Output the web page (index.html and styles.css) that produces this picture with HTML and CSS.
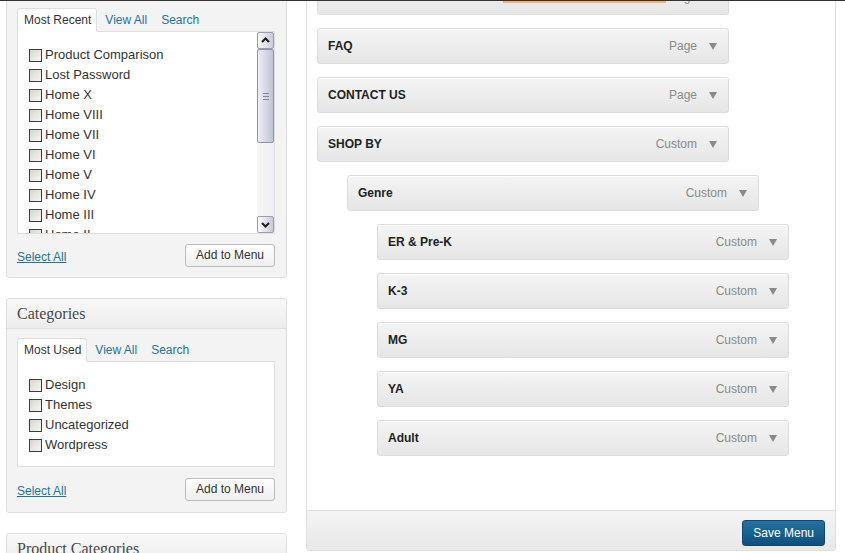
FILE: index.html
```html
<!DOCTYPE html>
<html lang="en">
<head>
<meta charset="utf-8">
<title>Menus</title>
<link rel="stylesheet" href="styles.css">
</head>
<body>
<div class="layout">
  <aside class="sidebar">
    <section class="panel panel-pages">
      <div class="panel-body">
        <ul class="tabs">
          <li class="tab active">Most Recent</li>
          <li class="tab"><a href="#">View All</a></li>
          <li class="tab"><a href="#">Search</a></li>
        </ul>
        <div class="tab-box scroll-box">
          <ul class="checklist">
            <li><input type="checkbox">Product Comparison</li>
            <li><input type="checkbox">Lost Password</li>
            <li><input type="checkbox">Home X</li>
            <li><input type="checkbox">Home VIII</li>
            <li><input type="checkbox">Home VII</li>
            <li><input type="checkbox">Home VI</li>
            <li><input type="checkbox">Home V</li>
            <li><input type="checkbox">Home IV</li>
            <li><input type="checkbox">Home III</li>
            <li><input type="checkbox">Home II</li>
          </ul>
          <div class="scrollbar">
            <div class="sb-btn"><svg width="15" height="15" viewBox="0 0 15 15"><polyline points="4,9 7.5,5.5 11,9" fill="none" stroke="#1e1e1e" stroke-width="2"/></svg></div>
            <div class="sb-thumb"><span class="grip"></span></div>
            <div class="sb-track"></div>
            <div class="sb-btn"><svg width="15" height="15" viewBox="0 0 15 15"><polyline points="4,6 7.5,9.5 11,6" fill="none" stroke="#1e1e1e" stroke-width="2"/></svg></div>
          </div>
        </div>
        <div class="panel-foot">
          <a href="#" class="select-all">Select All</a>
          <button class="btn">Add to Menu</button>
        </div>
      </div>
    </section>

    <section class="panel panel-cats">
      <h3 class="panel-head">Categories</h3>
      <div class="panel-body">
        <ul class="tabs">
          <li class="tab active">Most Used</li>
          <li class="tab"><a href="#">View All</a></li>
          <li class="tab"><a href="#">Search</a></li>
        </ul>
        <div class="tab-box">
          <ul class="checklist">
            <li><input type="checkbox">Design</li>
            <li><input type="checkbox">Themes</li>
            <li><input type="checkbox">Uncategorized</li>
            <li><input type="checkbox">Wordpress</li>
          </ul>
        </div>
        <div class="panel-foot">
          <a href="#" class="select-all">Select All</a>
          <button class="btn">Add to Menu</button>
        </div>
      </div>
    </section>

    <section class="panel panel-last">
      <h3 class="panel-head">Product Categories</h3>
    </section>
  </aside>

  <main class="menu-box">
    <div class="menu-list">
      <div class="item"><span class="title">NEW ARRIVALS</span><span class="type">Page</span><svg class="arrow" width="8" height="7" viewBox="0 0 8 7"><polygon points="0,0 8,0 4,7"/></svg></div>
      <div class="item"><span class="title">FAQ</span><span class="type">Page</span><svg class="arrow" width="8" height="7" viewBox="0 0 8 7"><polygon points="0,0 8,0 4,7"/></svg></div>
      <div class="item"><span class="title">CONTACT US</span><span class="type">Page</span><svg class="arrow" width="8" height="7" viewBox="0 0 8 7"><polygon points="0,0 8,0 4,7"/></svg></div>
      <div class="item"><span class="title">SHOP BY</span><span class="type">Custom</span><svg class="arrow" width="8" height="7" viewBox="0 0 8 7"><polygon points="0,0 8,0 4,7"/></svg></div>
      <div class="item depth-1"><span class="title">Genre</span><span class="type">Custom</span><svg class="arrow" width="8" height="7" viewBox="0 0 8 7"><polygon points="0,0 8,0 4,7"/></svg></div>
      <div class="item depth-2"><span class="title">ER &amp; Pre-K</span><span class="type">Custom</span><svg class="arrow" width="8" height="7" viewBox="0 0 8 7"><polygon points="0,0 8,0 4,7"/></svg></div>
      <div class="item depth-2"><span class="title">K-3</span><span class="type">Custom</span><svg class="arrow" width="8" height="7" viewBox="0 0 8 7"><polygon points="0,0 8,0 4,7"/></svg></div>
      <div class="item depth-2"><span class="title">MG</span><span class="type">Custom</span><svg class="arrow" width="8" height="7" viewBox="0 0 8 7"><polygon points="0,0 8,0 4,7"/></svg></div>
      <div class="item depth-2"><span class="title">YA</span><span class="type">Custom</span><svg class="arrow" width="8" height="7" viewBox="0 0 8 7"><polygon points="0,0 8,0 4,7"/></svg></div>
      <div class="item depth-2"><span class="title">Adult</span><span class="type">Custom</span><svg class="arrow" width="8" height="7" viewBox="0 0 8 7"><polygon points="0,0 8,0 4,7"/></svg></div>
    </div>
    <div class="menu-foot">
      <button class="save">Save Menu</button>
    </div>
  </main>
</div>
<div class="orange-strip"></div>
<div class="topline"></div>
</body>
</html>
```

FILE: styles.css
```css
html, body {
  margin: 0;
  padding: 0;
  background: #fff;
  overflow: hidden;
  height: 553px;
}
body {
  font-family: "Liberation Sans", Arial, sans-serif;
  font-size: 12px;
  color: #333;
}
a { color: #21759b; text-decoration: none; }

.layout {
  display: flex;
  align-items: flex-start;
  gap: 19px;
  padding-left: 6px;
  height: 553px;
  overflow: hidden;
}

/* ---------- sidebar ---------- */
.sidebar {
  width: 281px;
  flex: none;
  margin-top: -20px;
}
.panel {
  border: 1px solid #dfdfdf;
  border-radius: 3px;
  background: #f3f3f3;
  margin-bottom: 20px;
}
.panel-last { margin-bottom: 0; }
.panel-pages .panel-body { padding-top: 27px; }
.panel-head {
  margin: 0;
  height: 29px;
  line-height: 30px;
  padding: 0 10px;
  font-family: "Liberation Serif", "Times New Roman", serif;
  font-weight: normal;
  font-size: 16px;
  color: #464646;
  background: linear-gradient(to bottom, #f9f9f9, #ececec);
  border-bottom: 1px solid #dfdfdf;
  border-radius: 3px 3px 0 0;
  text-shadow: 0 1px 0 #fff;
}
.panel-body {
  padding: 9px 11px 0 10px;
}
.tabs {
  display: flex;
  margin: 0 0 -1px;
  padding: 0;
  list-style: none;
}
.tab {
  padding: 4px 5px 4px 6px;
  line-height: 14px;
  font-size: 12px;
  border: 1px solid transparent;
  margin-right: 1px;
}
.tab.active {
  position: relative;
  background: #fff;
  border-color: #dfdfdf;
  border-bottom-color: #fff;
  border-radius: 3px 3px 0 0;
  color: #333;
}
.tab-box {
  background: #fff;
  border: 1px solid #dfdfdf;
}
.checklist {
  margin: 0;
  padding: 13px 0 11px 11px;
  list-style: none;
}
.checklist li {
  display: flex;
  align-items: center;
  height: 20px;
  line-height: 20px;
  font-size: 13px;
  color: #333;
  white-space: nowrap;
}
.checklist input {
  appearance: none;
  -webkit-appearance: none;
  margin: 0 3px 0 0;
  width: 13px;
  height: 13px;
  box-sizing: border-box;
  border: 1px solid #3c3c3c;
  background: linear-gradient(135deg, #d6d6d0, #f6f6f4);
  flex: none;
}

.scroll-box {
  height: 203px;
  box-sizing: border-box;
  display: flex;
}
.scroll-box .checklist {
  flex: 1;
  overflow: hidden;
  padding-bottom: 0;
}
.scrollbar {
  width: 17px;
  flex: none;
  display: flex;
  flex-direction: column;
  background: linear-gradient(to right, #f7f7fa, #eeeef4);
}
.sb-btn {
  height: 17px;
  box-sizing: border-box;
  border: 1px solid #9b9daf;
  border-radius: 2px;
  background: linear-gradient(to right, #fbfbfd, #c9cad8);
  display: flex;
  align-items: center;
  justify-content: center;
}
.sb-thumb {
  height: 94px;
  box-sizing: border-box;
  border: 1px solid #9092a8;
  border-radius: 2px;
  background: linear-gradient(to right, #eeeef5, #c2c3d5);
  display: flex;
  align-items: center;
  justify-content: center;
}
.grip {
  width: 6px;
  height: 5px;
  border-top: 1px solid #85879a;
  border-bottom: 1px solid #85879a;
  background: linear-gradient(to bottom, transparent 2px, #85879a 2px, #85879a 3px, transparent 3px);
}
.sb-track { flex: 1; }

.panel-foot {
  display: flex;
  justify-content: space-between;
  align-items: center;
  padding: 10px 0;
}
.panel-cats .panel-foot { padding: 11px 0; }
.select-all {
  text-decoration: underline;
  font-size: 12px;
  line-height: 14px;
  margin-top: 3px;
}
.btn {
  font-family: inherit;
  font-size: 12px;
  color: #333;
  height: 23px;
  padding: 0 10px;
  border: 1px solid #bbb;
  border-radius: 3px;
  background: linear-gradient(to bottom, #fefefe, #efefef);
  line-height: 21px;
}

/* ---------- menu box ---------- */
.menu-box {
  width: 530px;
  flex: none;
  box-sizing: border-box;
  margin-top: -30px;
  border: 1px solid #dfdfdf;
  border-radius: 0 0 3px 3px;
  background: #fff;
}
.menu-list {
  display: flex;
  flex-direction: column;
  align-items: flex-start;
  gap: 13px;
  padding: 8px 0 54px 10px;
}
.item {
  display: flex;
  align-items: center;
  width: 412px;
  height: 36px;
  box-sizing: border-box;
  padding: 0 11px 0 10px;
  border: 1px solid #dcdcdc;
  border-radius: 3px;
  background: linear-gradient(to bottom, #f4f4f4, #e6e6e6);
  box-shadow: inset 0 1px 0 #fff;
  font-size: 12px;
}
.depth-1 { margin-left: 30px; }
.depth-2 { margin-left: 60px; }
.title {
  flex: 1;
  font-weight: bold;
  color: #222;
}
.type { color: #8a8a8a; }
.arrow {
  margin-left: 12px;
  fill: #8a8a8a;
  flex: none;
}
.menu-foot {
  display: flex;
  justify-content: flex-end;
  padding: 9px 10px 4px;
  border-top: 1px solid #dfdfdf;
  background: linear-gradient(to bottom, #f4f4f4, #e8e8e8);
  border-radius: 0 0 3px 3px;
}
.save {
  font-family: inherit;
  font-size: 12px;
  color: #fff;
  height: 26px;
  padding: 0 10px;
  border: 1px solid #0e4a78;
  border-radius: 3px;
  background: linear-gradient(to bottom, #26709f, #0f4f7e);
  line-height: 24px;
}

/* overlays at the very top edge */
.orange-strip {
  position: absolute;
  top: 0;
  left: 503px;
  width: 163px;
  height: 3px;
  background: #f3b27a;
}
.topline {
  position: absolute;
  top: 0;
  left: 0;
  right: 0;
  height: 1px;
  background: #333;
}
```
